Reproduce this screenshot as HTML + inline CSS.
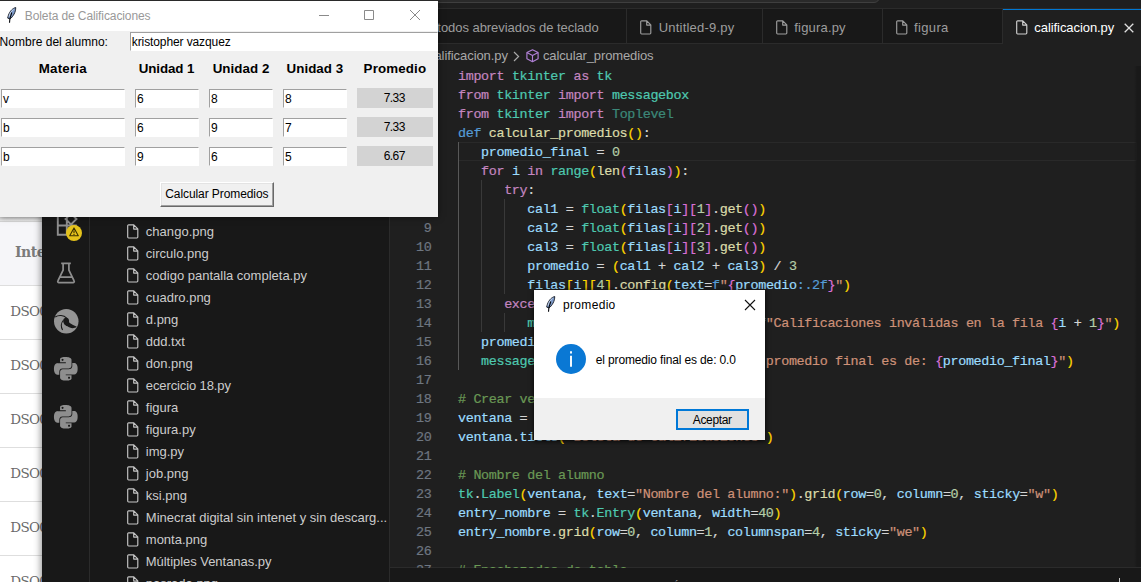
<!DOCTYPE html>
<html lang="es">
<head>
<meta charset="utf-8">
<title>calificacion.py</title>
<style>

*{box-sizing:border-box;margin:0;padding:0}
html,body{width:1141px;height:582px;overflow:hidden;background:#1f1f1f}
body{position:relative;font-family:"Liberation Sans",sans-serif;font-size:13px}
.a{position:absolute}
.x{position:absolute;white-space:pre;line-height:1}
svg{position:absolute;overflow:visible}
/* web page behind */
#web{left:0;top:0;width:60px;height:582px;background:#fff}
#web s{position:absolute;left:0;top:217px;width:60px;height:68px;background:#f6f6f9}
#web u{position:absolute;left:0;top:217px;width:60px;height:5px;background:linear-gradient(#d6d6d6,#e9e9e9);border-bottom:1px solid #d4d4d4}
#web i{position:absolute;left:0;width:60px;height:1px;background:#dedede}
/* vscode */
#vs{left:42px;top:0;width:1099px;height:582px;background:#1f1f1f;box-shadow:-1px 0 7px rgba(0,0,0,.45)}
#act{left:0;top:0;width:48px;height:582px;background:#181818;border-right:1px solid #2b2b2b}
#side{left:48px;top:0;width:300px;height:582px;background:#181818;border-right:1px solid #2b2b2b}
#ttl{left:348px;top:0;width:751px;height:9px;background:#1f1f1f;border-bottom:1px solid #2b2b2b}
#cc{left:-100px;top:-22px;width:590px;height:25px;border:1px solid #3f3f3f;border-radius:6px;background:#2a2a2a}
#tabs{left:348px;top:9px;width:751px;height:35px;background:#181818;border-bottom:1px solid #2b2b2b}
#tabs b{position:absolute;top:0;width:1px;height:35px;background:#2b2b2b}
#atab{left:961px;top:9px;width:138px;height:35px;background:#1f1f1f;border-top:1px solid #0078d4}
#panel{left:348px;top:567px;width:751px;height:15px;background:#181818;border-top:1px solid #2b2b2b}
#cur{left:416px;top:142px;width:679px;height:19px;border:1px solid #292929;border-left:0}
.g{position:absolute;width:1px;background:#393939}
.ln{position:absolute;left:340px;width:49.5px;text-align:right;height:19px;line-height:19px;color:#6e7681;white-space:pre}
.cl{position:absolute;left:416px;height:19px;line-height:19px;color:#d4d4d4;white-space:pre}
.ln,.cl{font-family:"Liberation Mono",monospace;font-size:13.4px;letter-spacing:-0.341px;-webkit-text-stroke:.2px}
.k{color:#c586c0}.t{color:#4ec9b0}.d{color:#569cd6}.f{color:#dcdcaa}.v{color:#9cdcfe}.n{color:#b5cea8}
.s{color:#ce9178}.c{color:#6a9955}.p{color:#ffd700}.q{color:#da70d6}.r{color:#179fff}.u{color:#4ec9b0;opacity:.62}
/* tk window */
#tk{left:0;top:0;width:438px;height:217px;background:#f0f0f0;border-top:1px solid #2a2a2a;box-shadow:0 0 6px rgba(0,0,0,.5)}
#tkt{left:0;top:0;width:438px;height:30px;background:#fff}
.e{position:absolute;height:19px;background:#fff;border-top:1px solid #a0a0a0;border-left:1px solid #a0a0a0;border-bottom:1px solid #fff;border-right:1px solid #fff}
.pl{position:absolute;left:357px;width:76px;height:20px;background:#d3d3d3}
#btn{left:160px;top:180.5px;width:114px;height:25.5px;background:#f0f0f0;border:1px solid #fff;border-right-color:#696969;border-bottom-color:#696969;box-shadow:inset -1px -1px 0 #a0a0a0, inset 1px 1px 0 #e3e3e3}
/* dialog */
#dlg{left:534px;top:290px;width:231px;height:150px;background:#fff;box-shadow:0 1px 4px 1px rgba(0,0,0,.6)}
#dft{left:0;top:108px;width:231px;height:42px;background:#f0f0f0}
#ok{left:142px;top:119px;width:73px;height:21px;background:#e1e1e1;border:2px solid #0078d7}

</style>
</head>
<body>
<div id="web" class="a"><s></s><u></u>
<i style="top:285px"></i>
<i style="top:339px"></i>
<i style="top:393px"></i>
<i style="top:447px"></i>
<i style="top:501px"></i>
<i style="top:555px"></i>
<span class="x" style="left:15.00px;top:244.88px;font-size:14px;color:#7b7b7b;font-family:'DejaVu Serif', 'Liberation Serif', serif;font-weight:700;letter-spacing:-.5px;">Integ</span>
<span class="x" style="left:10.30px;top:304.50px;font-size:13.5px;color:#6a6a6a;font-family:'DejaVu Serif', 'Liberation Serif', serif;letter-spacing:-.7px;">DSO00</span>
<span class="x" style="left:10.30px;top:358.50px;font-size:13.5px;color:#6a6a6a;font-family:'DejaVu Serif', 'Liberation Serif', serif;letter-spacing:-.7px;">DSO00</span>
<span class="x" style="left:10.30px;top:412.50px;font-size:13.5px;color:#6a6a6a;font-family:'DejaVu Serif', 'Liberation Serif', serif;letter-spacing:-.7px;">DSO00</span>
<span class="x" style="left:10.30px;top:466.50px;font-size:13.5px;color:#6a6a6a;font-family:'DejaVu Serif', 'Liberation Serif', serif;letter-spacing:-.7px;">DSO00</span>
<span class="x" style="left:10.30px;top:520.50px;font-size:13.5px;color:#6a6a6a;font-family:'DejaVu Serif', 'Liberation Serif', serif;letter-spacing:-.7px;">DSO00</span>
<span class="x" style="left:10.30px;top:574.50px;font-size:13.5px;color:#6a6a6a;font-family:'DejaVu Serif', 'Liberation Serif', serif;letter-spacing:-.7px;">DSO00</span>
</div>
<div id="vs" class="a">
<div id="ttl" class="a"><div id="cc" class="a"></div></div>
<div id="tabs" class="a"><b style="left:236px"></b><b style="left:372px"></b><b style="left:492px"></b><b style="left:612px"></b></div>
<div id="atab" class="a"></div>
<div id="cur" class="a"></div>
<div class="g" style="left:416.0px;top:142px;height:228px;background:#585858"></div>
<div class="g" style="left:439.1px;top:180px;height:152px;background:#393939"></div>
<div class="g" style="left:462.2px;top:199px;height:95px;background:#393939"></div>
<div class="g" style="left:462.2px;top:313px;height:19px;background:#393939"></div>
<div id="panel" class="a"></div>
<div id="side" class="a"></div>
<div id="act" class="a"></div>
</div>
<svg style="left:126.5px;top:223.5px" width="12" height="15" viewBox="0 0 12 15" fill="none" stroke="#c5c5c5" stroke-width="1.15" stroke-linejoin="round"><path d="M1.6 .9h5.2l4 4v8.2a.9.9 0 0 1-.9.9H1.6a.9.9 0 0 1-.9-.9V1.8a.9.9 0 0 1 .9-.9zM6.7 1v4.1h4"/></svg>
<span class="x" style="left:145.80px;top:225.30px;font-size:13px;color:#cccccc;letter-spacing:0.039px;">chango.png</span>
<svg style="left:126.5px;top:245.5px" width="12" height="15" viewBox="0 0 12 15" fill="none" stroke="#c5c5c5" stroke-width="1.15" stroke-linejoin="round"><path d="M1.6 .9h5.2l4 4v8.2a.9.9 0 0 1-.9.9H1.6a.9.9 0 0 1-.9-.9V1.8a.9.9 0 0 1 .9-.9zM6.7 1v4.1h4"/></svg>
<span class="x" style="left:145.80px;top:247.30px;font-size:13px;color:#cccccc;">circulo.png</span>
<svg style="left:126.5px;top:267.5px" width="12" height="15" viewBox="0 0 12 15" fill="none" stroke="#c5c5c5" stroke-width="1.15" stroke-linejoin="round"><path d="M1.6 .9h5.2l4 4v8.2a.9.9 0 0 1-.9.9H1.6a.9.9 0 0 1-.9-.9V1.8a.9.9 0 0 1 .9-.9zM6.7 1v4.1h4"/></svg>
<span class="x" style="left:145.80px;top:269.30px;font-size:13px;color:#cccccc;">codigo pantalla completa.py</span>
<svg style="left:126.5px;top:289.5px" width="12" height="15" viewBox="0 0 12 15" fill="none" stroke="#c5c5c5" stroke-width="1.15" stroke-linejoin="round"><path d="M1.6 .9h5.2l4 4v8.2a.9.9 0 0 1-.9.9H1.6a.9.9 0 0 1-.9-.9V1.8a.9.9 0 0 1 .9-.9zM6.7 1v4.1h4"/></svg>
<span class="x" style="left:145.80px;top:291.30px;font-size:13px;color:#cccccc;">cuadro.png</span>
<svg style="left:126.5px;top:311.5px" width="12" height="15" viewBox="0 0 12 15" fill="none" stroke="#c5c5c5" stroke-width="1.15" stroke-linejoin="round"><path d="M1.6 .9h5.2l4 4v8.2a.9.9 0 0 1-.9.9H1.6a.9.9 0 0 1-.9-.9V1.8a.9.9 0 0 1 .9-.9zM6.7 1v4.1h4"/></svg>
<span class="x" style="left:145.80px;top:313.30px;font-size:13px;color:#cccccc;">d.png</span>
<svg style="left:126.5px;top:333.5px" width="12" height="15" viewBox="0 0 12 15" fill="none" stroke="#c5c5c5" stroke-width="1.15" stroke-linejoin="round"><path d="M1.6 .9h5.2l4 4v8.2a.9.9 0 0 1-.9.9H1.6a.9.9 0 0 1-.9-.9V1.8a.9.9 0 0 1 .9-.9zM6.7 1v4.1h4"/></svg>
<span class="x" style="left:145.80px;top:335.30px;font-size:13px;color:#cccccc;">ddd.txt</span>
<svg style="left:126.5px;top:355.5px" width="12" height="15" viewBox="0 0 12 15" fill="none" stroke="#c5c5c5" stroke-width="1.15" stroke-linejoin="round"><path d="M1.6 .9h5.2l4 4v8.2a.9.9 0 0 1-.9.9H1.6a.9.9 0 0 1-.9-.9V1.8a.9.9 0 0 1 .9-.9zM6.7 1v4.1h4"/></svg>
<span class="x" style="left:145.80px;top:357.30px;font-size:13px;color:#cccccc;">don.png</span>
<svg style="left:126.5px;top:377.5px" width="12" height="15" viewBox="0 0 12 15" fill="none" stroke="#c5c5c5" stroke-width="1.15" stroke-linejoin="round"><path d="M1.6 .9h5.2l4 4v8.2a.9.9 0 0 1-.9.9H1.6a.9.9 0 0 1-.9-.9V1.8a.9.9 0 0 1 .9-.9zM6.7 1v4.1h4"/></svg>
<span class="x" style="left:145.80px;top:379.30px;font-size:13px;color:#cccccc;letter-spacing:-0.108px;">ecercicio 18.py</span>
<svg style="left:126.5px;top:399.5px" width="12" height="15" viewBox="0 0 12 15" fill="none" stroke="#c5c5c5" stroke-width="1.15" stroke-linejoin="round"><path d="M1.6 .9h5.2l4 4v8.2a.9.9 0 0 1-.9.9H1.6a.9.9 0 0 1-.9-.9V1.8a.9.9 0 0 1 .9-.9zM6.7 1v4.1h4"/></svg>
<span class="x" style="left:145.80px;top:401.30px;font-size:13px;color:#cccccc;">figura</span>
<svg style="left:126.5px;top:421.5px" width="12" height="15" viewBox="0 0 12 15" fill="none" stroke="#c5c5c5" stroke-width="1.15" stroke-linejoin="round"><path d="M1.6 .9h5.2l4 4v8.2a.9.9 0 0 1-.9.9H1.6a.9.9 0 0 1-.9-.9V1.8a.9.9 0 0 1 .9-.9zM6.7 1v4.1h4"/></svg>
<span class="x" style="left:145.80px;top:423.30px;font-size:13px;color:#cccccc;">figura.py</span>
<svg style="left:126.5px;top:443.5px" width="12" height="15" viewBox="0 0 12 15" fill="none" stroke="#c5c5c5" stroke-width="1.15" stroke-linejoin="round"><path d="M1.6 .9h5.2l4 4v8.2a.9.9 0 0 1-.9.9H1.6a.9.9 0 0 1-.9-.9V1.8a.9.9 0 0 1 .9-.9zM6.7 1v4.1h4"/></svg>
<span class="x" style="left:145.80px;top:445.30px;font-size:13px;color:#cccccc;">img.py</span>
<svg style="left:126.5px;top:465.5px" width="12" height="15" viewBox="0 0 12 15" fill="none" stroke="#c5c5c5" stroke-width="1.15" stroke-linejoin="round"><path d="M1.6 .9h5.2l4 4v8.2a.9.9 0 0 1-.9.9H1.6a.9.9 0 0 1-.9-.9V1.8a.9.9 0 0 1 .9-.9zM6.7 1v4.1h4"/></svg>
<span class="x" style="left:145.80px;top:467.30px;font-size:13px;color:#cccccc;">job.png</span>
<svg style="left:126.5px;top:487.5px" width="12" height="15" viewBox="0 0 12 15" fill="none" stroke="#c5c5c5" stroke-width="1.15" stroke-linejoin="round"><path d="M1.6 .9h5.2l4 4v8.2a.9.9 0 0 1-.9.9H1.6a.9.9 0 0 1-.9-.9V1.8a.9.9 0 0 1 .9-.9zM6.7 1v4.1h4"/></svg>
<span class="x" style="left:145.80px;top:489.30px;font-size:13px;color:#cccccc;">ksi.png</span>
<svg style="left:126.5px;top:509.5px" width="12" height="15" viewBox="0 0 12 15" fill="none" stroke="#c5c5c5" stroke-width="1.15" stroke-linejoin="round"><path d="M1.6 .9h5.2l4 4v8.2a.9.9 0 0 1-.9.9H1.6a.9.9 0 0 1-.9-.9V1.8a.9.9 0 0 1 .9-.9zM6.7 1v4.1h4"/></svg>
<span class="x" style="left:145.80px;top:511.30px;font-size:13px;color:#cccccc;">Minecrat digital sin intenet y sin descarg...</span>
<svg style="left:126.5px;top:531.5px" width="12" height="15" viewBox="0 0 12 15" fill="none" stroke="#c5c5c5" stroke-width="1.15" stroke-linejoin="round"><path d="M1.6 .9h5.2l4 4v8.2a.9.9 0 0 1-.9.9H1.6a.9.9 0 0 1-.9-.9V1.8a.9.9 0 0 1 .9-.9zM6.7 1v4.1h4"/></svg>
<span class="x" style="left:145.80px;top:533.30px;font-size:13px;color:#cccccc;">monta.png</span>
<svg style="left:126.5px;top:553.5px" width="12" height="15" viewBox="0 0 12 15" fill="none" stroke="#c5c5c5" stroke-width="1.15" stroke-linejoin="round"><path d="M1.6 .9h5.2l4 4v8.2a.9.9 0 0 1-.9.9H1.6a.9.9 0 0 1-.9-.9V1.8a.9.9 0 0 1 .9-.9zM6.7 1v4.1h4"/></svg>
<span class="x" style="left:145.80px;top:555.30px;font-size:13px;color:#cccccc;letter-spacing:-0.043px;">Múltiples Ventanas.py</span>
<svg style="left:126.5px;top:575.5px" width="12" height="15" viewBox="0 0 12 15" fill="none" stroke="#c5c5c5" stroke-width="1.15" stroke-linejoin="round"><path d="M1.6 .9h5.2l4 4v8.2a.9.9 0 0 1-.9.9H1.6a.9.9 0 0 1-.9-.9V1.8a.9.9 0 0 1 .9-.9zM6.7 1v4.1h4"/></svg>
<span class="x" style="left:145.80px;top:577.30px;font-size:13px;color:#cccccc;">pasrada.png</span>
<span class="x" style="right:542.40px;top:20.70px;font-size:13px;color:#9d9d9d;letter-spacing:-0.051px;">Métodos abreviados de teclado</span>
<svg style="left:640.0px;top:20.0px" width="12" height="15" viewBox="0 0 12 15" fill="none" stroke="#9d9d9d" stroke-width="1.15" stroke-linejoin="round"><path d="M1.6 .9h5.2l4 4v8.2a.9.9 0 0 1-.9.9H1.6a.9.9 0 0 1-.9-.9V1.8a.9.9 0 0 1 .9-.9zM6.7 1v4.1h4"/></svg>
<span class="x" style="left:658.70px;top:20.70px;font-size:13px;color:#9d9d9d;letter-spacing:0.218px;">Untitled-9.py</span>
<svg style="left:776.0px;top:20.0px" width="12" height="15" viewBox="0 0 12 15" fill="none" stroke="#9d9d9d" stroke-width="1.15" stroke-linejoin="round"><path d="M1.6 .9h5.2l4 4v8.2a.9.9 0 0 1-.9.9H1.6a.9.9 0 0 1-.9-.9V1.8a.9.9 0 0 1 .9-.9zM6.7 1v4.1h4"/></svg>
<span class="x" style="left:794.30px;top:20.70px;font-size:13px;color:#9d9d9d;letter-spacing:0.178px;">figura.py</span>
<svg style="left:896.0px;top:20.0px" width="12" height="15" viewBox="0 0 12 15" fill="none" stroke="#9d9d9d" stroke-width="1.15" stroke-linejoin="round"><path d="M1.6 .9h5.2l4 4v8.2a.9.9 0 0 1-.9.9H1.6a.9.9 0 0 1-.9-.9V1.8a.9.9 0 0 1 .9-.9zM6.7 1v4.1h4"/></svg>
<span class="x" style="left:914.00px;top:20.70px;font-size:13px;color:#9d9d9d;letter-spacing:0.354px;">figura</span>
<svg style="left:1015.5px;top:20.0px" width="12" height="15" viewBox="0 0 12 15" fill="none" stroke="#d0d0d0" stroke-width="1.15" stroke-linejoin="round"><path d="M1.6 .9h5.2l4 4v8.2a.9.9 0 0 1-.9.9H1.6a.9.9 0 0 1-.9-.9V1.8a.9.9 0 0 1 .9-.9zM6.7 1v4.1h4"/></svg>
<span class="x" style="left:1034.30px;top:20.70px;font-size:13px;color:#ffffff;letter-spacing:-0.067px;">calificacion.py</span>
<svg style="left:1124px;top:22.5px" width="10" height="10" viewBox="0 0 10 10" stroke="#e0e0e0" stroke-width="1.3"><path d="M.7 .7l8.6 8.6M9.3 .7L.7 9.3"/></svg>
<span class="x" style="left:428.00px;top:48.80px;font-size:13px;color:#a9a9a9;letter-spacing:-0.067px;">calificacion.py</span>
<svg style="left:513px;top:50.5px" width="7" height="11" viewBox="0 0 7 11" fill="none" stroke="#a9a9a9" stroke-width="1.2"><path d="M1 1l4.6 4.5L1 10"/></svg>
<svg style="left:525.5px;top:49px" width="13" height="13.5" viewBox="0 0 13 13.5" fill="none" stroke="#b180d7" stroke-width="1.15" stroke-linejoin="round"><path d="M6.5 .8l5.6 2.7v6.3l-5.6 2.9L.9 9.8V3.5zM.9 3.5l5.6 2.9 5.6-2.9M6.5 6.4v6.3"/></svg>
<span class="x" style="left:542.90px;top:48.80px;font-size:13px;color:#a9a9a9;letter-spacing:-0.120px;">calcular_promedios</span>
<div class="a" style="left:0;top:0;width:1141px;height:568px;overflow:hidden">
<div class="ln" style="left:382px;top:66.7px">1</div>
<div class="ln" style="left:382px;top:85.7px">2</div>
<div class="ln" style="left:382px;top:104.7px">3</div>
<div class="ln" style="left:382px;top:123.7px">4</div>
<div class="ln" style="left:382px;top:142.7px">5</div>
<div class="ln" style="left:382px;top:161.7px">6</div>
<div class="ln" style="left:382px;top:180.7px">7</div>
<div class="ln" style="left:382px;top:199.7px">8</div>
<div class="ln" style="left:382px;top:218.7px">9</div>
<div class="ln" style="left:382px;top:237.7px">10</div>
<div class="ln" style="left:382px;top:256.7px">11</div>
<div class="ln" style="left:382px;top:275.7px">12</div>
<div class="ln" style="left:382px;top:294.7px">13</div>
<div class="ln" style="left:382px;top:313.7px">14</div>
<div class="ln" style="left:382px;top:332.7px">15</div>
<div class="ln" style="left:382px;top:351.7px">16</div>
<div class="ln" style="left:382px;top:370.7px">17</div>
<div class="ln" style="left:382px;top:389.7px">18</div>
<div class="ln" style="left:382px;top:408.7px">19</div>
<div class="ln" style="left:382px;top:427.7px">20</div>
<div class="ln" style="left:382px;top:446.7px">21</div>
<div class="ln" style="left:382px;top:465.7px">22</div>
<div class="ln" style="left:382px;top:484.7px">23</div>
<div class="ln" style="left:382px;top:503.7px">24</div>
<div class="ln" style="left:382px;top:522.7px">25</div>
<div class="ln" style="left:382px;top:541.7px">26</div>
<div class="ln" style="left:382px;top:560.7px">27</div>
<div class="cl" style="left:458px;top:66.7px"><span class="k">import</span> <span class="t">tkinter</span> <span class="k">as</span> <span class="t">tk</span></div>
<div class="cl" style="left:458px;top:85.7px"><span class="k">from</span> <span class="t">tkinter</span> <span class="k">import</span> <span class="t">messagebox</span></div>
<div class="cl" style="left:458px;top:104.7px"><span class="k">from</span> <span class="t">tkinter</span> <span class="k">import</span> <span class="u">Toplevel</span></div>
<div class="cl" style="left:458px;top:123.7px"><span class="d">def</span> <span class="f">calcular_promedios</span><span class="p">()</span>:</div>
<div class="cl" style="left:458px;top:142.7px">   <span class="v">promedio_final</span> = <span class="n">0</span></div>
<div class="cl" style="left:458px;top:161.7px">   <span class="k">for</span> <span class="v">i</span> <span class="k">in</span> <span class="t">range</span><span class="p">(</span><span class="f">len</span><span class="q">(</span><span class="v">filas</span><span class="q">)</span><span class="p">)</span>:</div>
<div class="cl" style="left:458px;top:180.7px">      <span class="k">try</span>:</div>
<div class="cl" style="left:458px;top:199.7px">         <span class="v">cal1</span> = <span class="t">float</span><span class="p">(</span><span class="v">filas</span><span class="q">[</span><span class="v">i</span><span class="q">]</span><span class="q">[</span><span class="n">1</span><span class="q">]</span>.<span class="f">get</span><span class="q">()</span><span class="p">)</span></div>
<div class="cl" style="left:458px;top:218.7px">         <span class="v">cal2</span> = <span class="t">float</span><span class="p">(</span><span class="v">filas</span><span class="q">[</span><span class="v">i</span><span class="q">]</span><span class="q">[</span><span class="n">2</span><span class="q">]</span>.<span class="f">get</span><span class="q">()</span><span class="p">)</span></div>
<div class="cl" style="left:458px;top:237.7px">         <span class="v">cal3</span> = <span class="t">float</span><span class="p">(</span><span class="v">filas</span><span class="q">[</span><span class="v">i</span><span class="q">]</span><span class="q">[</span><span class="n">3</span><span class="q">]</span>.<span class="f">get</span><span class="q">()</span><span class="p">)</span></div>
<div class="cl" style="left:458px;top:256.7px">         <span class="v">promedio</span> = <span class="p">(</span><span class="v">cal1</span> + <span class="v">cal2</span> + <span class="v">cal3</span><span class="p">)</span> / <span class="n">3</span></div>
<div class="cl" style="left:458px;top:275.7px">         <span class="v">filas</span><span class="p">[</span><span class="v">i</span><span class="p">]</span><span class="p">[</span><span class="n">4</span><span class="p">]</span>.<span class="f">config</span><span class="p">(</span><span class="v">text</span>=<span class="d">f</span><span class="s">"</span><span class="q">{</span><span class="v">promedio</span><span class="d">:.2f</span><span class="q">}</span><span class="s">"</span><span class="p">)</span></div>
<div class="cl" style="left:458px;top:294.7px">      <span class="k">except</span> <span class="t">ValueError</span>:</div>
<div class="cl" style="left:458px;top:313.7px">         <span class="t">messagebox</span>.<span class="f">showerror</span><span class="p">(</span><span class="s">"Error"</span>, <span class="d">f</span><span class="s">"Calificaciones inválidas en la fila </span><span class="q">{</span><span class="v">i</span> + <span class="n">1</span><span class="q">}</span><span class="s">"</span><span class="p">)</span></div>
<div class="cl" style="left:458px;top:332.7px">   <span class="v">promedio_final</span> = <span class="v">promedio_final</span> / <span class="n">3</span></div>
<div class="cl" style="left:458px;top:351.7px">   <span class="t">messagebox</span>.<span class="f">showinfo</span><span class="p">(</span><span class="s">"promedio"</span>, <span class="d">f</span><span class="s">"el promedio final es de: </span><span class="q">{</span><span class="v">promedio_final</span><span class="q">}</span><span class="s">"</span><span class="p">)</span></div>
<div class="cl" style="left:458px;top:389.7px"><span class="c"># Crear ventana</span></div>
<div class="cl" style="left:458px;top:408.7px"><span class="v">ventana</span> = <span class="t">tk</span>.<span class="t">Tk</span><span class="p">()</span></div>
<div class="cl" style="left:458px;top:427.7px"><span class="v">ventana</span>.<span class="v">title</span><span class="p">(</span><span class="s">"Boleta de Calificaciones"</span><span class="p">)</span></div>
<div class="cl" style="left:458px;top:465.7px"><span class="c"># Nombre del alumno</span></div>
<div class="cl" style="left:458px;top:484.7px"><span class="t">tk</span>.<span class="t">Label</span><span class="p">(</span><span class="v">ventana</span>, <span class="v">text</span>=<span class="s">"Nombre del alumno:"</span><span class="p">)</span>.<span class="f">grid</span><span class="p">(</span><span class="v">row</span>=<span class="n">0</span>, <span class="v">column</span>=<span class="n">0</span>, <span class="v">sticky</span>=<span class="s">"w"</span><span class="p">)</span></div>
<div class="cl" style="left:458px;top:503.7px"><span class="v">entry_nombre</span> = <span class="t">tk</span>.<span class="t">Entry</span><span class="p">(</span><span class="v">ventana</span>, <span class="v">width</span>=<span class="n">40</span><span class="p">)</span></div>
<div class="cl" style="left:458px;top:522.7px"><span class="v">entry_nombre</span>.<span class="f">grid</span><span class="p">(</span><span class="v">row</span>=<span class="n">0</span>, <span class="v">column</span>=<span class="n">1</span>, <span class="v">columnspan</span>=<span class="n">4</span>, <span class="v">sticky</span>=<span class="s">"we"</span><span class="p">)</span></div>
<div class="cl" style="left:458px;top:560.7px"><span class="c"># Encabezados de tabla</span></div>
</div>
<span class="x" style="left:400.00px;top:580.69px;font-size:11px;color:#9d9d9d;">PROBLEMAS</span>
<span class="x" style="left:482.00px;top:580.69px;font-size:11px;color:#9d9d9d;">SALIDA</span>
<span class="x" style="left:540.70px;top:580.69px;font-size:11px;color:#9d9d9d;">CONSOLA DE DEPURACIÓN</span>
<span class="x" style="left:704.00px;top:580.69px;font-size:11px;color:#e7e7e7;">TERMINAL</span>
<span class="x" style="left:782.00px;top:580.69px;font-size:11px;color:#9d9d9d;">PUERTOS</span>
<div class="a" style="left:1119px;top:578px;width:1px;height:4px;background:#c5c5c5"></div>
<div class="a" style="left:1134px;top:66px;width:7px;height:501px;background:linear-gradient(to right,rgba(24,24,24,0),#191919 45%)"></div>
<svg style="left:50px;top:205px" width="30" height="32" viewBox="0 0 30 32" fill="none" stroke="#8e8e8e" stroke-width="1.9"><path d="M7.800 11h9v9.500h-9zM7.800 20.500h9v9.300h-9zM16.800 20.500h9v9.300h-9zM21 8.500l5.500 5.500L21 19.500 15.500 14z"/></svg>
<div class="a" style="left:66.300px;top:224.700px;width:16px;height:16px;border-radius:8px;background:#e4c21b"></div>
<svg style="left:69.300px;top:227px" width="10" height="10" viewBox="0 0 10 10" fill="none" stroke="#3a3000" stroke-width="1.100" stroke-linejoin="round"><path d="M5 .9L9.300 8.800H.7zM5 3.600v2.700M5 7v.9"/></svg>
<svg style="left:56px;top:261.8px" width="20" height="22.2" viewBox="0 0 20 23" fill="none" stroke="#8e8e8e" stroke-width="1.8" stroke-linejoin="round"><path d="M5 1.5h10M7 1.5v7L1.600 19.5a1.2 1.2 0 0 0 1.100 1.800h14.600a1.2 1.2 0 0 0 1.100-1.800L13 8.500v-7M3.700 15.700h12.600"/></svg>
<svg style="left:53.8px;top:308.5px" width="24.5" height="24.5" viewBox="0 0 24 24"><circle cx="12" cy="12" r="12" fill="#949494"/><path d="M9.200 10.400C9.800 8.200 13.200 7.800 14.400 10C15.200 11.600 14.200 12.800 15.400 13.800C17.400 15.200 19.800 16.200 22.400 17.400C19.800 19.600 15.600 19 13.200 17C10.400 16.400 8.400 13.400 9.200 10.400Z" fill="#181818"/><path d="M1.200 7.800C4.500 5.600 9.500 5.800 12.400 9M9.200 11C6.600 14 6.800 17.600 8.400 20.600" fill="none" stroke="#181818" stroke-width="1"/></svg>
<svg style="left:54.2px;top:357.4px" width="23.6" height="23.6" viewBox="0 0 24 24" fill="#8e8e8e"><path d="M14.25.18l.9.2.73.26.59.3.45.32.34.34.25.34.16.33.1.3.04.26.02.2-.01.13V8.500l-.05.63-.13.55-.21.46-.26.38-.3.31-.33.25-.35.19-.35.14-.33.1-.3.07-.26.04-.21.02H8.770l-.69.05-.59.14-.5.22-.41.27-.33.32-.27.35-.2.36-.15.37-.1.35-.07.32-.04.27-.02.21v3.060H3.170l-.21-.03-.28-.07-.32-.12-.35-.18-.36-.26-.36-.36-.35-.46-.32-.59-.28-.73-.21-.88-.14-1.050-.05-1.230.06-1.220.16-1.040.24-.87.32-.71.36-.57.4-.44.42-.33.42-.24.4-.16.36-.1.32-.05.24-.01h.16l.06.01h8.160v-.83H6.180l-.01-2.750-.02-.37.05-.34.11-.31.17-.28.25-.26.31-.23.38-.2.44-.18.51-.15.58-.12.64-.1.71-.06.77-.04.84-.02 1.270.05zm-6.300 1.980l-.23.33-.08.41.08.41.23.34.33.22.41.09.41-.09.33-.22.23-.34.08-.41-.08-.41-.23-.33-.33-.22-.41-.09-.41.09zm13.090 3.950l.28.06.32.12.35.18.36.27.36.35.35.47.32.59.28.73.21.88.14 1.040.05 1.230-.06 1.230-.16 1.040-.24.86-.32.71-.36.57-.4.45-.42.33-.42.24-.4.16-.36.09-.32.05-.24.02-.16-.01h-8.220v.82h5.840l.01 2.760.02.36-.05.34-.11.31-.17.29-.25.25-.31.24-.38.2-.44.17-.51.15-.58.13-.64.09-.71.07-.77.04-.84.01-1.270-.04-1.070-.14-.9-.2-.73-.25-.59-.3-.45-.33-.34-.34-.25-.34-.16-.33-.1-.3-.04-.25-.02-.2.01-.13v-5.340l.05-.64.13-.54.21-.46.26-.38.3-.32.33-.24.35-.2.35-.14.33-.1.3-.06.26-.04.21-.02.13-.01h5.840l.69-.05.59-.14.5-.21.41-.28.33-.32.27-.35.2-.36.15-.36.1-.35.07-.32.04-.28.02-.21V6.070h2.090l.14.01zm-6.470 14.250l-.23.33-.08.41.08.41.23.33.33.23.41.08.41-.08.33-.23.23-.33.08-.41-.08-.41-.23-.33-.33-.23-.41-.08-.41.08z"/></svg>
<svg style="left:54.2px;top:405.2px" width="23.6" height="23.6" viewBox="0 0 24 24" fill="#8e8e8e"><path d="M14.25.18l.9.2.73.26.59.3.45.32.34.34.25.34.16.33.1.3.04.26.02.2-.01.13V8.500l-.05.63-.13.55-.21.46-.26.38-.3.31-.33.25-.35.19-.35.14-.33.1-.3.07-.26.04-.21.02H8.770l-.69.05-.59.14-.5.22-.41.27-.33.32-.27.35-.2.36-.15.37-.1.35-.07.32-.04.27-.02.21v3.060H3.170l-.21-.03-.28-.07-.32-.12-.35-.18-.36-.26-.36-.36-.35-.46-.32-.59-.28-.73-.21-.88-.14-1.050-.05-1.230.06-1.220.16-1.040.24-.87.32-.71.36-.57.4-.44.42-.33.42-.24.4-.16.36-.1.32-.05.24-.01h.16l.06.01h8.160v-.83H6.180l-.01-2.750-.02-.37.05-.34.11-.31.17-.28.25-.26.31-.23.38-.2.44-.18.51-.15.58-.12.64-.1.71-.06.77-.04.84-.02 1.270.05zm-6.300 1.980l-.23.33-.08.41.08.41.23.34.33.22.41.09.41-.09.33-.22.23-.34.08-.41-.08-.41-.23-.33-.33-.22-.41-.09-.41.09zm13.090 3.950l.28.06.32.12.35.18.36.27.36.35.35.47.32.59.28.73.21.88.14 1.040.05 1.230-.06 1.230-.16 1.040-.24.86-.32.71-.36.57-.4.45-.42.33-.42.24-.4.16-.36.09-.32.05-.24.02-.16-.01h-8.220v.82h5.840l.01 2.760.02.36-.05.34-.11.31-.17.29-.25.25-.31.24-.38.2-.44.17-.51.15-.58.13-.64.09-.71.07-.77.04-.84.01-1.270-.04-1.070-.14-.9-.2-.73-.25-.59-.3-.45-.33-.34-.34-.25-.34-.16-.33-.1-.3-.04-.25-.02-.2.01-.13v-5.340l.05-.64.13-.54.21-.46.26-.38.3-.32.33-.24.35-.2.35-.14.33-.1.3-.06.26-.04.21-.02.13-.01h5.840l.69-.05.59-.14.5-.21.41-.28.33-.32.27-.35.2-.36.15-.36.1-.35.07-.32.04-.28.02-.21V6.070h2.090l.14.01zm-6.470 14.250l-.23.33-.08.41.08.41.23.33.33.23.41.08.41-.08.33-.23.23-.33.08-.41-.08-.41-.23-.33-.33-.23-.41-.08-.41.08z"/></svg>
<div id="tk" class="a"><div id="tkt" class="a"></div>
<svg style="left:7.3px;top:5.5px" width="10" height="16" viewBox="0 0 10 16"><path d="M8.700 .5C5.400 1.300 1.700 5 .7 11.100L3 12C6.100 9.600 8.900 5 8.700 .5Z" fill="#7f9ccb" stroke="#10151f" stroke-width=".9" stroke-linejoin="round"/><path d="M2 9.600C2.800 6.200 4.500 3.800 6.500 2.200" fill="none" stroke="#d3def0" stroke-width=".9"/><path d="M4.800 5.500L2.900 11.500L2.500 15.700" fill="none" stroke="#05070c" stroke-width="1.100"/></svg>
<svg style="left:319px;top:14px" width="10" height="1" viewBox="0 0 10 1"><path d="M0 .5h10" stroke="#8a8a8a"/></svg>
<svg style="left:364px;top:9px" width="10" height="10" viewBox="0 0 10 10" fill="none" stroke="#8a8a8a"><path d="M.5 .5h9v9h-9z"/></svg>
<svg style="left:410px;top:9px" width="10" height="10" viewBox="0 0 10 10" fill="none" stroke="#8a8a8a"><path d="M0 0l10 10M10 0L0 10"/></svg>
<div class="e" style="left:130px;top:31px;width:308px;height:19px"></div>
<div class="e" style="left:1px;top:88px;width:124px"></div>
<div class="e" style="left:135px;top:88px;width:64px"></div>
<div class="e" style="left:209px;top:88px;width:64px"></div>
<div class="e" style="left:283px;top:88px;width:64px"></div>
<div class="pl" style="top:87px"></div>
<div class="e" style="left:1px;top:117px;width:124px"></div>
<div class="e" style="left:135px;top:117px;width:64px"></div>
<div class="e" style="left:209px;top:117px;width:64px"></div>
<div class="e" style="left:283px;top:117px;width:64px"></div>
<div class="pl" style="top:116px"></div>
<div class="e" style="left:1px;top:146px;width:124px"></div>
<div class="e" style="left:135px;top:146px;width:64px"></div>
<div class="e" style="left:209px;top:146px;width:64px"></div>
<div class="e" style="left:283px;top:146px;width:64px"></div>
<div class="pl" style="top:145px"></div>
<div id="btn" class="a"></div>
</div>
<span class="x" style="left:24.80px;top:10.24px;font-size:12px;color:#999999;letter-spacing:-0.099px;">Boleta de Calificaciones</span>
<span class="x" style="left:-0.40px;top:36.24px;font-size:12px;color:#000;letter-spacing:0.014px;">Nombre del alumno:</span>
<span class="x" style="left:131.80px;top:36.24px;font-size:12px;color:#000;letter-spacing:-0.107px;">kristopher vazquez</span>
<span class="x" style="left:38.80px;top:61.72px;font-size:13.33px;color:#000;font-weight:700;letter-spacing:0.188px;">Materia</span>
<span class="x" style="left:138.70px;top:61.72px;font-size:13.33px;color:#000;font-weight:700;letter-spacing:-0.083px;">Unidad 1</span>
<span class="x" style="left:212.70px;top:61.72px;font-size:13.33px;color:#000;font-weight:700;letter-spacing:0.060px;">Unidad 2</span>
<span class="x" style="left:286.50px;top:61.72px;font-size:13.33px;color:#000;font-weight:700;letter-spacing:0.060px;">Unidad 3</span>
<span class="x" style="left:363.60px;top:61.72px;font-size:13.33px;color:#000;font-weight:700;letter-spacing:0.147px;">Promedio</span>
<span class="x" style="left:3.00px;top:92.84px;font-size:12px;color:#000;">v</span>
<span class="x" style="left:137.00px;top:92.84px;font-size:12px;color:#000;">6</span>
<span class="x" style="left:211.00px;top:92.84px;font-size:12px;color:#000;">8</span>
<span class="x" style="left:285.00px;top:92.84px;font-size:12px;color:#000;">8</span>
<span class="x" style="left:383.70px;top:92.44px;font-size:12px;color:#000;letter-spacing:-0.553px;">7.33</span>
<span class="x" style="left:3.00px;top:121.84px;font-size:12px;color:#000;">b</span>
<span class="x" style="left:137.00px;top:121.84px;font-size:12px;color:#000;">6</span>
<span class="x" style="left:211.00px;top:121.84px;font-size:12px;color:#000;">9</span>
<span class="x" style="left:285.00px;top:121.84px;font-size:12px;color:#000;">7</span>
<span class="x" style="left:383.70px;top:121.44px;font-size:12px;color:#000;letter-spacing:-0.553px;">7.33</span>
<span class="x" style="left:3.00px;top:150.84px;font-size:12px;color:#000;">b</span>
<span class="x" style="left:137.00px;top:150.84px;font-size:12px;color:#000;">9</span>
<span class="x" style="left:211.00px;top:150.84px;font-size:12px;color:#000;">6</span>
<span class="x" style="left:285.00px;top:150.84px;font-size:12px;color:#000;">5</span>
<span class="x" style="left:383.70px;top:150.44px;font-size:12px;color:#000;letter-spacing:-0.553px;">6.67</span>
<span class="x" style="left:165.30px;top:187.64px;font-size:12px;color:#000;letter-spacing:-0.089px;">Calcular Promedios</span>
<div id="dlg" class="a"><div id="dft" class="a"></div><div id="ok" class="a"></div>
<svg style="left:22px;top:54px" width="30" height="30" viewBox="0 0 30 30"><circle cx="15" cy="15" r="15" fill="#0a78d4"/><path d="M15 7.300v2.200M15 11.800v11" stroke="#fff" stroke-width="1.9"/></svg>
<svg style="left:211px;top:10px" width="10" height="10" viewBox="0 0 10 10" fill="none" stroke="#111" stroke-width="1.1"><path d="M0 0l10 10M10 0L0 10"/></svg>
</div>
<svg style="left:545.5px;top:295.5px" width="10" height="16" viewBox="0 0 10 16"><path d="M8.700 .5C5.400 1.300 1.700 5 .7 11.100L3 12C6.100 9.600 8.900 5 8.700 .5Z" fill="#7f9ccb" stroke="#10151f" stroke-width=".9" stroke-linejoin="round"/><path d="M2 9.600C2.800 6.200 4.500 3.800 6.500 2.200" fill="none" stroke="#d3def0" stroke-width=".9"/><path d="M4.800 5.500L2.900 11.500L2.500 15.700" fill="none" stroke="#05070c" stroke-width="1.100"/></svg>
<span class="x" style="left:563.00px;top:298.84px;font-size:12px;color:#000;letter-spacing:0.324px;">promedio</span>
<span class="x" style="left:595.80px;top:353.84px;font-size:12px;color:#000;letter-spacing:-0.148px;">el promedio final es de: 0.0</span>
<span class="x" style="left:692.80px;top:413.54px;font-size:12px;color:#000;letter-spacing:-0.343px;">Aceptar</span>
</body>
</html>
